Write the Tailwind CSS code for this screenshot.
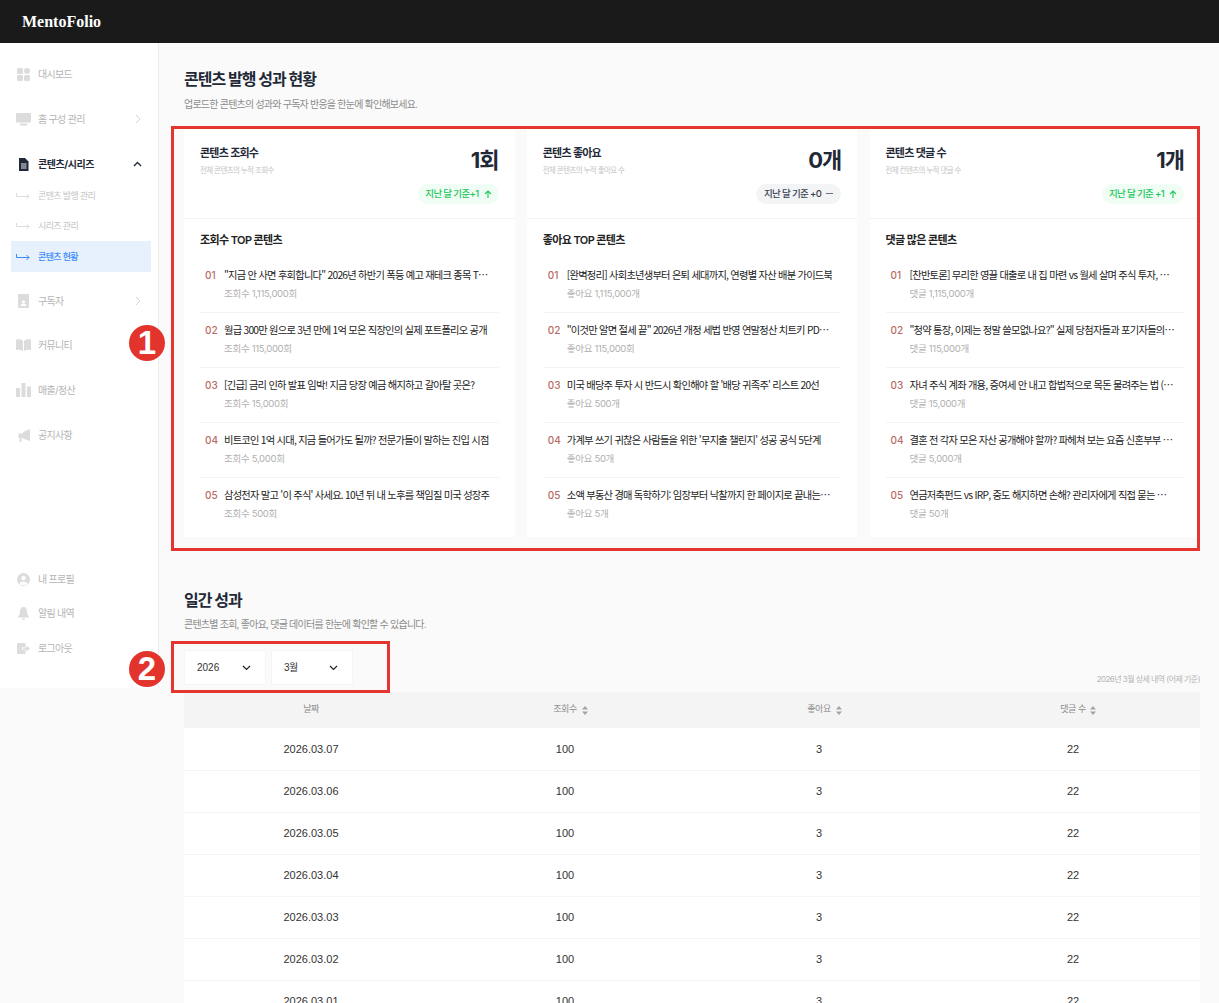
<!DOCTYPE html>
<html lang="ko">
<head>
    <meta charset="UTF-8">
    <meta name="viewport" content="width=device-width, initial-scale=1.0">
    <title>MentoFolio</title>
    <script src="https://cdn.jsdelivr.net/npm/@tailwindcss/browser@4"></script>
</head>
<body class="relative h-[1003px] overflow-hidden bg-[#fafafa] font-['Inter','Noto_Sans_CJK_KR',sans-serif] text-[#1f2937]">
    <header class="h-[43px] bg-[#1a1a1a] flex items-center pl-[22px]">
        <span class="font-['Liberation_Serif',serif] font-bold text-[16px] text-white">MentoFolio</span>
    </header>
    <div class="flex items-start">
        <aside class="w-[159px] h-[645px] shrink-0 bg-white border-r border-[#eeeeee] flex flex-col justify-between pt-4 pb-[25px] text-[10px] tracking-[-0.7px] text-[#b5b5b5]">
            <nav>
                <a class="h-[30px] mb-[15px] flex items-center pl-[17px] gap-[8px]">
                    <svg class="w-[13px] h-[13px]" viewBox="0 0 13 13" fill="#dcdcdc"><rect x="0" y="0" width="6" height="6" rx="1.5"/><circle cx="10" cy="3" r="3"/><rect x="0" y="7" width="6" height="6" rx="1.5"/><rect x="7" y="7" width="6" height="6" rx="1.5"/></svg>
                    대시보드
                </a>
                <a class="h-[30px] mb-[15px] flex items-center pl-[16px] pr-[17px]">
                    <svg class="w-[15px] h-[13px] mr-[7px]" viewBox="0 0 15 13" fill="#dcdcdc"><rect x="0" y="0" width="15" height="9.5" rx="1"/><rect x="4" y="10.5" width="7" height="2"/></svg>
                    홈 구성 관리
                    <svg class="ml-auto w-[6px] h-[10px]" viewBox="0 0 6 10" fill="none" stroke="#d4d4d4" stroke-width="1"><path d="M1 1l4 4-4 4"/></svg>
                </a>
                <a class="h-[30px] flex items-center pl-[17px] pr-[16px] gap-[8px] font-bold tracking-[-0.45px] text-[#1f2937]">
                    <svg class="w-[13px] h-[13px]" viewBox="0 0 13 13" fill="#1f2937"><path d="M2 0h6l3.5 3.5V13H2z"/><path d="M4 6h5.500M4 8h5.500M4 10h5.500" stroke="#fff" stroke-width="0.9"/></svg>
                    콘텐츠/시리즈
                    <svg class="ml-auto w-[9px] h-[6px]" viewBox="0 0 9 6" fill="none" stroke="#1f2937" stroke-width="1.400"><path d="M1 5l3.500-3.500L8 5"/></svg>
                </a>
                <div class="mt-px text-[9px] tracking-[-0.65px]">
                    <a class="h-[31px] flex items-center pl-[16px] gap-[8px] text-[#c4c4c4]">
                        <svg class="w-[14px] h-[6px]" viewBox="0 0 14 6" fill="none" stroke="#d8d8d8" stroke-width="0.9"><path d="M0.500 0v3.500H13M10.500 1l2.500 2.500L10.500 6"/></svg>
                        콘텐츠 발행 관리
                    </a>
                    <a class="h-[30px] flex items-center pl-[16px] gap-[8px] text-[#c4c4c4]">
                        <svg class="w-[14px] h-[6px]" viewBox="0 0 14 6" fill="none" stroke="#d8d8d8" stroke-width="0.9"><path d="M0.500 0v3.500H13M10.500 1l2.500 2.500L10.500 6"/></svg>
                        시리즈 관리
                    </a>
                    <a class="h-[31px] ml-[11px] w-[140px] flex items-center pl-[5px] gap-[8px] font-medium bg-[#e6f1fd] text-[#3b8af5]">
                        <svg class="w-[14px] h-[6px]" viewBox="0 0 14 6" fill="none" stroke="#3b8af5" stroke-width="1"><path d="M0.500 0v3.500H13M10.500 1l2.500 2.500L10.500 6"/></svg>
                        콘텐츠 현황
                    </a>
                </div>
                <a class="h-[30px] mt-[14px] mb-[14px] flex items-center pl-[18px] pr-[17px]">
                    <svg class="w-[11px] h-[14px] mr-[9px]" viewBox="0 0 11 14" fill="#dcdcdc"><path d="M0 0h11v14H0z"/><circle cx="5.500" cy="8" r="1.600" fill="#fff"/><path d="M2.500 12c0-3 6-3 6 0z" fill="#fff"/></svg>
                    구독자
                    <svg class="ml-auto w-[6px] h-[10px]" viewBox="0 0 6 10" fill="none" stroke="#d4d4d4" stroke-width="1"><path d="M1 1l4 4-4 4"/></svg>
                </a>
                <a class="h-[30px] mb-[15px] flex items-center pl-[16px] gap-[7px]">
                    <svg class="w-[15px] h-[12px]" viewBox="0 0 15 12" fill="#dcdcdc"><path d="M0 0.500c2.500-0.500 5 0 7 1.200V12c-2-1-4.500-1.500-7-1z"/><path d="M15 0.500c-2.500-0.500-5 0-7 1.200V12c2-1 4.500-1.500 7-1z"/></svg>
                    커뮤니티
                </a>
                <a class="h-[30px] mb-[15px] flex items-center pl-[16px] gap-[7px]">
                    <svg class="w-[15px] h-[14px]" viewBox="0 0 15 14" fill="#dcdcdc"><rect x="0" y="5" width="4" height="9"/><rect x="5.500" y="0" width="4" height="14"/><rect x="11" y="3.500" width="4" height="10.500"/></svg>
                    매출/정산
                </a>
                <a class="h-[30px] flex items-center pl-[17px] gap-[8px]">
                    <svg class="w-[13px] h-[13px]" viewBox="0 0 13 13" fill="#dcdcdc"><path d="M13 0v12L6 9.500V9H4.500v4H2.500V9H1.500V4.500H6V3z"/></svg>
                    공지사항
                </a>
            </nav>
            <div class="flex flex-col gap-[4.500px]">
                <a class="h-[30px] flex items-center pl-[17px] gap-[8px]">
                    <svg class="w-[13px] h-[13px]" viewBox="0 0 13 13"><circle cx="6.500" cy="6.500" r="6.500" fill="#dcdcdc"/><circle cx="6.500" cy="5" r="2.200" fill="#fff"/><path d="M2.500 11c0.500-3.500 7.500-3.500 8 0-2 1.800-6 1.800-8 0z" fill="#fff"/></svg>
                    내 프로필
                </a>
                <a class="h-[30px] flex items-center pl-[18px] gap-[9px]">
                    <svg class="w-[11px] h-[13px]" viewBox="0 0 11 13" fill="#dcdcdc"><path d="M5.500 0C8 0 9 2 9 5c0 2.500 2 4 2 5.500H0C0 9 2 7.500 2 5c0-3 1-5 3.500-5z"/><path d="M4 11.500h3c0 2-3 2-3 0z"/></svg>
                    알림 내역
                </a>
                <a class="h-[30px] flex items-center pl-[17px] gap-[8px]">
                    <svg class="w-[13px] h-[11px]" viewBox="0 0 13 11" fill="#dcdcdc"><path d="M0 0h8.500v4H5v3h3.500v4H0z"/><path d="M6 4.500h3.500V2.500L13 5.500l-3.500 3V6.500H6z"/></svg>
                    로그아웃
                </a>
            </div>
        </aside>

        <main class="flex-1 pl-[25px] pr-[19px] pt-[25px]">
            <h1 class="text-[16px] leading-[22px] font-bold tracking-[-1px]">콘텐츠 발행 성과 현황</h1>
            <p class="mt-[4px] text-[10px] leading-[20px] tracking-[-0.78px] text-[#8c8c8c]">업로드한 콘텐츠의 성과와 구독자 반응을 한눈에 확인해보세요.</p>

            <section class="mt-[16px] grid grid-cols-3 gap-[12.25px] h-[407px]">
                <article class="bg-white">
                    <div class="h-[89px] px-4 pt-[14px] border-b border-[#f3f3f3] flex justify-between">
                        <div>
                            <h2 class="text-[11px] leading-[18px] font-semibold tracking-[-0.75px]">콘텐츠 조회수</h2>
                            <p class="mt-[2px] text-[7.500px] leading-[14px] tracking-[-0.6px] text-[#c4c4c4]">전체 콘텐츠의 누적 조회수</p>
                        </div>
                        <div class="flex flex-col items-end">
                            <strong class="text-[22px] leading-[32px] font-bold tracking-[-1px]">1회</strong>
                            <span class="mt-[8px] h-[20px] px-[7px] rounded-full bg-[#f0fdf4] text-[#22c55e] text-[9.500px] font-medium tracking-[-0.65px] flex items-center gap-[5px]">지난 달 기준+1 <svg class="w-[8px] h-[8px]" viewBox="0 0 8 8" fill="none" stroke="#22c55e" stroke-width="1.100"><path d="M4 8V1M1 4l3-3 3 3"/></svg></span>
                        </div>
                    </div>
                    <div class="px-4 pt-[12px]">
                        <h3 class="text-[11px] leading-[18px] font-semibold tracking-[-0.6px] text-[#222222]">조회수 TOP 콘텐츠</h3>
                        <ul class="mt-[9px]">
                            <li class="h-[55px] pt-[9px] pl-[5px] pr-[9px] border-b border-[#f3f3f3] flex gap-[8px]"><span class="w-[11px] text-[10px] leading-[16px] font-medium text-[#b96b63]">01</span><div class="min-w-0 flex-1"><p class="truncate font-['Noto_Sans_CJK_KR',sans-serif] text-[10.250px] leading-[16px] tracking-[-0.75px] text-[#222222]">"지금 안 사면 후회합니다" 2026년 하반기 폭등 예고 재테크 종목 TOP 10 분석</p><p class="mt-[4px] text-[9.500px] leading-[14px] tracking-[-0.3px] text-[#b0b0b0]">조회수 1,115,000회</p></div></li>
                            <li class="h-[55px] pt-[9px] pl-[5px] pr-[9px] border-b border-[#f3f3f3] flex gap-[8px]"><span class="w-[11px] text-[10px] leading-[16px] font-medium text-[#b96b63]">02</span><div class="min-w-0 flex-1"><p class="truncate font-['Noto_Sans_CJK_KR',sans-serif] text-[10.250px] leading-[16px] tracking-[-0.75px] text-[#222222]">월급 300만 원으로 3년 만에 1억 모은 직장인의 실제 포트폴리오 공개</p><p class="mt-[4px] text-[9.500px] leading-[14px] tracking-[-0.3px] text-[#b0b0b0]">조회수 115,000회</p></div></li>
                            <li class="h-[55px] pt-[9px] pl-[5px] pr-[9px] border-b border-[#f3f3f3] flex gap-[8px]"><span class="w-[11px] text-[10px] leading-[16px] font-medium text-[#b96b63]">03</span><div class="min-w-0 flex-1"><p class="truncate font-['Noto_Sans_CJK_KR',sans-serif] text-[10.250px] leading-[16px] tracking-[-0.75px] text-[#222222]">[긴급] 금리 인하 발표 임박! 지금 당장 예금 해지하고 갈아탈 곳은?</p><p class="mt-[4px] text-[9.500px] leading-[14px] tracking-[-0.3px] text-[#b0b0b0]">조회수 15,000회</p></div></li>
                            <li class="h-[55px] pt-[9px] pl-[5px] pr-[9px] border-b border-[#f3f3f3] flex gap-[8px]"><span class="w-[11px] text-[10px] leading-[16px] font-medium text-[#b96b63]">04</span><div class="min-w-0 flex-1"><p class="truncate font-['Noto_Sans_CJK_KR',sans-serif] text-[10.250px] leading-[16px] tracking-[-0.75px] text-[#222222]">비트코인 1억 시대, 지금 들어가도 될까? 전문가들이 말하는 진입 시점</p><p class="mt-[4px] text-[9.500px] leading-[14px] tracking-[-0.3px] text-[#b0b0b0]">조회수 5,000회</p></div></li>
                            <li class="h-[55px] pt-[9px] pl-[5px] pr-[9px] flex gap-[8px]"><span class="w-[11px] text-[10px] leading-[16px] font-medium text-[#b96b63]">05</span><div class="min-w-0 flex-1"><p class="truncate font-['Noto_Sans_CJK_KR',sans-serif] text-[10.250px] leading-[16px] tracking-[-0.75px] text-[#222222]">삼성전자 말고 '이 주식' 사세요. 10년 뒤 내 노후를 책임질 미국 성장주</p><p class="mt-[4px] text-[9.500px] leading-[14px] tracking-[-0.3px] text-[#b0b0b0]">조회수 500회</p></div></li>
                        </ul>
                    </div>
                </article>

                <article class="bg-white">
                    <div class="h-[89px] px-4 pt-[14px] border-b border-[#f3f3f3] flex justify-between">
                        <div>
                            <h2 class="text-[11px] leading-[18px] font-semibold tracking-[-0.75px]">콘텐츠 좋아요</h2>
                            <p class="mt-[2px] text-[7.500px] leading-[14px] tracking-[-0.6px] text-[#c4c4c4]">전체 콘텐츠의 누적 좋아요 수</p>
                        </div>
                        <div class="flex flex-col items-end">
                            <strong class="text-[22px] leading-[32px] font-bold tracking-[-1px]">0개</strong>
                            <span class="mt-[8px] h-[20px] px-[8px] rounded-full bg-[#f3f4f6] text-[#374151] text-[9.500px] font-medium tracking-[-0.65px] flex items-center gap-[5px]">지난 달 기준 +0 <svg class="w-[7px] h-[2px]" viewBox="0 0 7 2" fill="#6b7280"><rect width="7" height="1"/></svg></span>
                        </div>
                    </div>
                    <div class="px-4 pt-[12px]">
                        <h3 class="text-[11px] leading-[18px] font-semibold tracking-[-0.6px] text-[#222222]">좋아요 TOP 콘텐츠</h3>
                        <ul class="mt-[9px]">
                            <li class="h-[55px] pt-[9px] pl-[5px] pr-[9px] border-b border-[#f3f3f3] flex gap-[8px]"><span class="w-[11px] text-[10px] leading-[16px] font-medium text-[#b96b63]">01</span><div class="min-w-0 flex-1"><p class="truncate font-['Noto_Sans_CJK_KR',sans-serif] text-[10.250px] leading-[16px] tracking-[-0.75px] text-[#222222]">[완벽정리] 사회초년생부터 은퇴 세대까지, 연령별 자산 배분 가이드북</p><p class="mt-[4px] text-[9.500px] leading-[14px] tracking-[-0.3px] text-[#b0b0b0]">좋아요 1,115,000개</p></div></li>
                            <li class="h-[55px] pt-[9px] pl-[5px] pr-[9px] border-b border-[#f3f3f3] flex gap-[8px]"><span class="w-[11px] text-[10px] leading-[16px] font-medium text-[#b96b63]">02</span><div class="min-w-0 flex-1"><p class="truncate font-['Noto_Sans_CJK_KR',sans-serif] text-[10.250px] leading-[16px] tracking-[-0.75px] text-[#222222]">"이것만 알면 절세 끝" 2026년 개정 세법 반영 연말정산 치트키 PDF 무료 배포</p><p class="mt-[4px] text-[9.500px] leading-[14px] tracking-[-0.3px] text-[#b0b0b0]">좋아요 115,000회</p></div></li>
                            <li class="h-[55px] pt-[9px] pl-[5px] pr-[9px] border-b border-[#f3f3f3] flex gap-[8px]"><span class="w-[11px] text-[10px] leading-[16px] font-medium text-[#b96b63]">03</span><div class="min-w-0 flex-1"><p class="truncate font-['Noto_Sans_CJK_KR',sans-serif] text-[10.250px] leading-[16px] tracking-[-0.75px] text-[#222222]">미국 배당주 투자 시 반드시 확인해야 할 '배당 귀족주' 리스트 20선</p><p class="mt-[4px] text-[9.500px] leading-[14px] tracking-[-0.3px] text-[#b0b0b0]">좋아요 500개</p></div></li>
                            <li class="h-[55px] pt-[9px] pl-[5px] pr-[9px] border-b border-[#f3f3f3] flex gap-[8px]"><span class="w-[11px] text-[10px] leading-[16px] font-medium text-[#b96b63]">04</span><div class="min-w-0 flex-1"><p class="truncate font-['Noto_Sans_CJK_KR',sans-serif] text-[10.250px] leading-[16px] tracking-[-0.75px] text-[#222222]">가계부 쓰기 귀찮은 사람들을 위한 '무지출 챌린지' 성공 공식 5단계</p><p class="mt-[4px] text-[9.500px] leading-[14px] tracking-[-0.3px] text-[#b0b0b0]">좋아요 50개</p></div></li>
                            <li class="h-[55px] pt-[9px] pl-[5px] pr-[9px] flex gap-[8px]"><span class="w-[11px] text-[10px] leading-[16px] font-medium text-[#b96b63]">05</span><div class="min-w-0 flex-1"><p class="truncate font-['Noto_Sans_CJK_KR',sans-serif] text-[10.250px] leading-[16px] tracking-[-0.75px] text-[#222222]">소액 부동산 경매 독학하기: 임장부터 낙찰까지 한 페이지로 끝내는 실전 가이드</p><p class="mt-[4px] text-[9.500px] leading-[14px] tracking-[-0.3px] text-[#b0b0b0]">좋아요 5개</p></div></li>
                        </ul>
                    </div>
                </article>

                <article class="bg-white">
                    <div class="h-[89px] px-4 pt-[14px] border-b border-[#f3f3f3] flex justify-between">
                        <div>
                            <h2 class="text-[11px] leading-[18px] font-semibold tracking-[-0.75px]">콘텐츠 댓글 수</h2>
                            <p class="mt-[2px] text-[7.500px] leading-[14px] tracking-[-0.6px] text-[#c4c4c4]">전체 컨텐츠의 누적 댓글 수</p>
                        </div>
                        <div class="flex flex-col items-end">
                            <strong class="text-[22px] leading-[32px] font-bold tracking-[-1px]">1개</strong>
                            <span class="mt-[8px] h-[20px] px-[7px] rounded-full bg-[#f0fdf4] text-[#22c55e] text-[9.500px] font-medium tracking-[-0.65px] flex items-center gap-[5px]">지난 달 기준 +1 <svg class="w-[8px] h-[8px]" viewBox="0 0 8 8" fill="none" stroke="#22c55e" stroke-width="1.100"><path d="M4 8V1M1 4l3-3 3 3"/></svg></span>
                        </div>
                    </div>
                    <div class="px-4 pt-[12px]">
                        <h3 class="text-[11px] leading-[18px] font-semibold tracking-[-0.6px] text-[#222222]">댓글 많은 콘텐츠</h3>
                        <ul class="mt-[9px]">
                            <li class="h-[55px] pt-[9px] pl-[5px] pr-[9px] border-b border-[#f3f3f3] flex gap-[8px]"><span class="w-[11px] text-[10px] leading-[16px] font-medium text-[#b96b63]">01</span><div class="min-w-0 flex-1"><p class="truncate font-['Noto_Sans_CJK_KR',sans-serif] text-[10.250px] leading-[16px] tracking-[-0.75px] text-[#222222]">[찬반토론] 무리한 영끌 대출로 내 집 마련 vs 월세 살며 주식 투자, 당신의 선택은?</p><p class="mt-[4px] text-[9.500px] leading-[14px] tracking-[-0.3px] text-[#b0b0b0]">댓글 1,115,000개</p></div></li>
                            <li class="h-[55px] pt-[9px] pl-[5px] pr-[9px] border-b border-[#f3f3f3] flex gap-[8px]"><span class="w-[11px] text-[10px] leading-[16px] font-medium text-[#b96b63]">02</span><div class="min-w-0 flex-1"><p class="truncate font-['Noto_Sans_CJK_KR',sans-serif] text-[10.250px] leading-[16px] tracking-[-0.75px] text-[#222222]">"청약 통장, 이제는 정말 쓸모없나요?" 실제 당첨자들과 포기자들의 솔직한 이야기</p><p class="mt-[4px] text-[9.500px] leading-[14px] tracking-[-0.3px] text-[#b0b0b0]">댓글 115,000개</p></div></li>
                            <li class="h-[55px] pt-[9px] pl-[5px] pr-[9px] border-b border-[#f3f3f3] flex gap-[8px]"><span class="w-[11px] text-[10px] leading-[16px] font-medium text-[#b96b63]">03</span><div class="min-w-0 flex-1"><p class="truncate font-['Noto_Sans_CJK_KR',sans-serif] text-[10.250px] leading-[16px] tracking-[-0.75px] text-[#222222]">자녀 주식 계좌 개용, 증여세 안 내고 합법적으로 목돈 물려주는 법 (Q&amp;A 총정리)</p><p class="mt-[4px] text-[9.500px] leading-[14px] tracking-[-0.3px] text-[#b0b0b0]">댓글 15,000개</p></div></li>
                            <li class="h-[55px] pt-[9px] pl-[5px] pr-[9px] border-b border-[#f3f3f3] flex gap-[8px]"><span class="w-[11px] text-[10px] leading-[16px] font-medium text-[#b96b63]">04</span><div class="min-w-0 flex-1"><p class="truncate font-['Noto_Sans_CJK_KR',sans-serif] text-[10.250px] leading-[16px] tracking-[-0.75px] text-[#222222]">결혼 전 각자 모은 자산 공개해야 할까? 파헤쳐 보는 요즘 신혼부부 재테크 현실</p><p class="mt-[4px] text-[9.500px] leading-[14px] tracking-[-0.3px] text-[#b0b0b0]">댓글 5,000개</p></div></li>
                            <li class="h-[55px] pt-[9px] pl-[5px] pr-[9px] flex gap-[8px]"><span class="w-[11px] text-[10px] leading-[16px] font-medium text-[#b96b63]">05</span><div class="min-w-0 flex-1"><p class="truncate font-['Noto_Sans_CJK_KR',sans-serif] text-[10.250px] leading-[16px] tracking-[-0.75px] text-[#222222]">연금저축펀드 vs IRP, 중도 해지하면 손해? 관리자에게 직접 묻는 궁금증 총정리</p><p class="mt-[4px] text-[9.500px] leading-[14px] tracking-[-0.3px] text-[#b0b0b0]">댓글 50개</p></div></li>
                        </ul>
                    </div>
                </article>
            </section>

            <h2 class="mt-[52px] text-[16px] leading-[22px] font-bold tracking-[-1px]">일간 성과</h2>
            <p class="mt-[3px] text-[10px] leading-[20px] tracking-[-0.77px] text-[#8c8c8c]">콘텐츠별 조회, 좋아요, 댓글 데이터를 한눈에 확인할 수 있습니다.</p>

            <div class="mt-[16px] flex items-end justify-between">
                <div class="flex gap-[5px]">
                    <div class="w-[82px] h-[35px] bg-white border border-[#f5f5f5] pl-[12px] pr-[14px] flex items-center justify-between font-['Liberation_Sans','Noto_Sans_CJK_KR',sans-serif] text-[10px] text-[#333333]">2026 <svg class="w-[9px] h-[6px]" viewBox="0 0 9 6" fill="none" stroke="#222222" stroke-width="1.200"><path d="M1 1l3.500 3.500L8 1"/></svg></div>
                    <div class="w-[82px] h-[35px] bg-white border border-[#f5f5f5] pl-[12px] pr-[14px] flex items-center justify-between font-['Liberation_Sans','Noto_Sans_CJK_KR',sans-serif] text-[10px] tracking-[-0.5px] text-[#333333]">3월 <svg class="w-[9px] h-[6px]" viewBox="0 0 9 6" fill="none" stroke="#222222" stroke-width="1.200"><path d="M1 1l3.500 3.500L8 1"/></svg></div>
                </div>
                <span class="text-[8px] tracking-[-0.55px] text-[#b5b5b5]">2026년 3월 상세 내역 (어제 기준)</span>
            </div>

            <table class="mt-[7px] w-full table-fixed bg-white text-center font-['Liberation_Sans','Noto_Sans_CJK_KR',sans-serif] text-[11px] text-[#333333]">
                <thead>
                    <tr class="h-[36px] bg-[#f4f4f4] text-[9px] tracking-[-0.5px] text-[#8c8c8c]">
                        <th class="font-normal">날짜</th>
                        <th class="font-normal"><span class="relative">조회수<svg class="absolute left-[29px] top-[2px] w-[6px] h-[9px]" viewBox="0 0 6 9" fill="#a3a3a3"><path d="M3 0l3 3.500H0zM3 9L0 5.500h6z"/></svg></span></th>
                        <th class="font-normal"><span class="relative">좋아요<svg class="absolute left-[29px] top-[2px] w-[6px] h-[9px]" viewBox="0 0 6 9" fill="#a3a3a3"><path d="M3 0l3 3.500H0zM3 9L0 5.500h6z"/></svg></span></th>
                        <th class="font-normal"><span class="relative">댓글 수<svg class="absolute left-[30px] top-[2px] w-[6px] h-[9px]" viewBox="0 0 6 9" fill="#a3a3a3"><path d="M3 0l3 3.500H0zM3 9L0 5.500h6z"/></svg></span></th>
                    </tr>
                </thead>
                <tbody>
                    <tr class="h-[42px] border-b border-[#f5f5f5]"><td>2026.03.07</td><td>100</td><td>3</td><td>22</td></tr>
                    <tr class="h-[42px] border-b border-[#f5f5f5]"><td>2026.03.06</td><td>100</td><td>3</td><td>22</td></tr>
                    <tr class="h-[42px] border-b border-[#f5f5f5]"><td>2026.03.05</td><td>100</td><td>3</td><td>22</td></tr>
                    <tr class="h-[42px] border-b border-[#f5f5f5]"><td>2026.03.04</td><td>100</td><td>3</td><td>22</td></tr>
                    <tr class="h-[42px] border-b border-[#f5f5f5]"><td>2026.03.03</td><td>100</td><td>3</td><td>22</td></tr>
                    <tr class="h-[42px] border-b border-[#f5f5f5]"><td>2026.03.02</td><td>100</td><td>3</td><td>22</td></tr>
                    <tr class="h-[42px] border-b border-[#f5f5f5]"><td>2026.03.01</td><td>100</td><td>3</td><td>22</td></tr>
                </tbody>
            </table>
        </main>
    </div>

    <!-- annotation overlays -->
    <div class="absolute left-[171px] top-[126px] w-[1029px] h-[425px] border-[3px] border-[#e53530]"></div>
    <div class="absolute left-[171px] top-[641px] w-[219px] h-[52px] border-[3px] border-[#e53530]"></div>
    <div class="absolute left-[129px] top-[325px] w-[36px] h-[36px] rounded-full bg-[#e2332c] text-white text-[33px] leading-[36px] font-bold text-center font-['Liberation_Sans',sans-serif]">1</div>
    <div class="absolute left-[129px] top-[651px] w-[36px] h-[36px] rounded-full bg-[#e2332c] text-white text-[33px] leading-[36px] font-bold text-center font-['Liberation_Sans',sans-serif]">2</div>
</body>
</html>
